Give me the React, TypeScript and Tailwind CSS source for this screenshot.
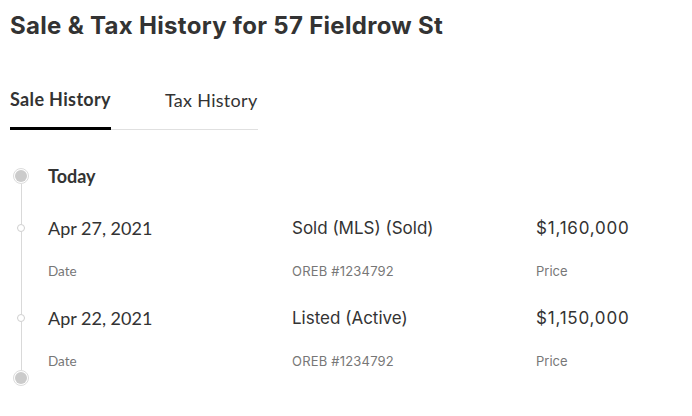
import React from "react";

type Sale = {
  date: string;
  event: string;
  source: string;
  price: string;
};

const sales: Sale[] = [
  { date: "Apr 27, 2021", event: "Sold (MLS) (Sold)", source: "OREB #1234792", price: "$1,160,000" },
  { date: "Apr 22, 2021", event: "Listed (Active)", source: "OREB #1234792", price: "$1,150,000" },
];

const lato = { fontFamily: "Lato, 'Liberation Sans', sans-serif" };

function BigDot() {
  return (
    <div className="w-4 h-4 rounded-full border border-[#dcdcdc] bg-white flex items-center justify-center shrink-0">
      <div className="w-3 h-3 rounded-full bg-[#cbcbcb]" />
    </div>
  );
}

function SaleRow({ sale, last }: { sale: Sale; last: boolean }) {
  return (
    <div className="flex">
      <div className="w-[22px] flex flex-col items-center shrink-0">
        <div className="w-px h-5 bg-[#d9d9d9]" />
        <div className="w-2 h-2 rounded-full border border-[#cfcfcf] bg-white shrink-0" />
        <div className="w-px flex-1 bg-[#d9d9d9]" />
      </div>
      <div className={`ml-4 flex-1 pt-3 ${last ? "" : "pb-[14px]"}`}>
        <div className="grid grid-cols-[244px_244px_1fr]">
          <div className="text-[18px] leading-6 text-[#333]" style={lato}>{sale.date}</div>
          <div className="text-[17px] leading-6 text-[#333] font-['Inter',sans-serif]">{sale.event}</div>
          <div className="text-[17px] leading-6 tracking-[0.8px] text-[#333] font-['Inter',sans-serif]">{sale.price}</div>
          <div className="mt-[22px] text-[13.5px] leading-[18px] text-[#777]" style={lato}>Date</div>
          <div className="mt-[22px] text-[13px] leading-[18px] tracking-[0.2px] text-[#777] font-['Inter',sans-serif]">{sale.source}</div>
          <div className="mt-[22px] text-[13px] leading-[18px] text-[#777] font-['Inter',sans-serif]">Price</div>
        </div>
      </div>
    </div>
  );
}

export default function App() {
  return (
    <div className="w-[692px] h-[416px] bg-white px-[10px] pt-3 overflow-hidden">
      <h1 className="text-[24px] leading-7 font-bold tracking-[0.3px] text-[#333] font-['Inter',sans-serif]">
        Sale &amp; Tax History for 57 Fieldrow St
      </h1>

      <div className="mt-[47px] inline-flex gap-[54px] border-b border-[#e0e0e0]">
        <button className="pb-4 -mb-px border-b-[3px] border-black text-[18px] leading-6 font-bold tracking-[0.35px] text-[#333]" style={lato}>
          Sale History
        </button>
        <button className="pb-4 text-[18px] leading-6 tracking-[0.3px] text-[#333]" style={lato}>
          Tax History
        </button>
      </div>

      <div className="mt-[38px]">
        <div className="flex">
          <div className="w-[22px] flex flex-col items-center shrink-0">
            <BigDot />
            <div className="w-px h-5 bg-[#d9d9d9]" />
          </div>
          <div className="ml-4 h-4 flex items-center text-[18px] font-bold text-[#333]" style={lato}>
            Today
          </div>
        </div>
        {sales.map((s, i) => (
          <SaleRow key={s.date} sale={s} last={i === sales.length - 1} />
        ))}
        <div className="w-[22px] flex justify-center">
          <BigDot />
        </div>
      </div>
    </div>
  );
}
